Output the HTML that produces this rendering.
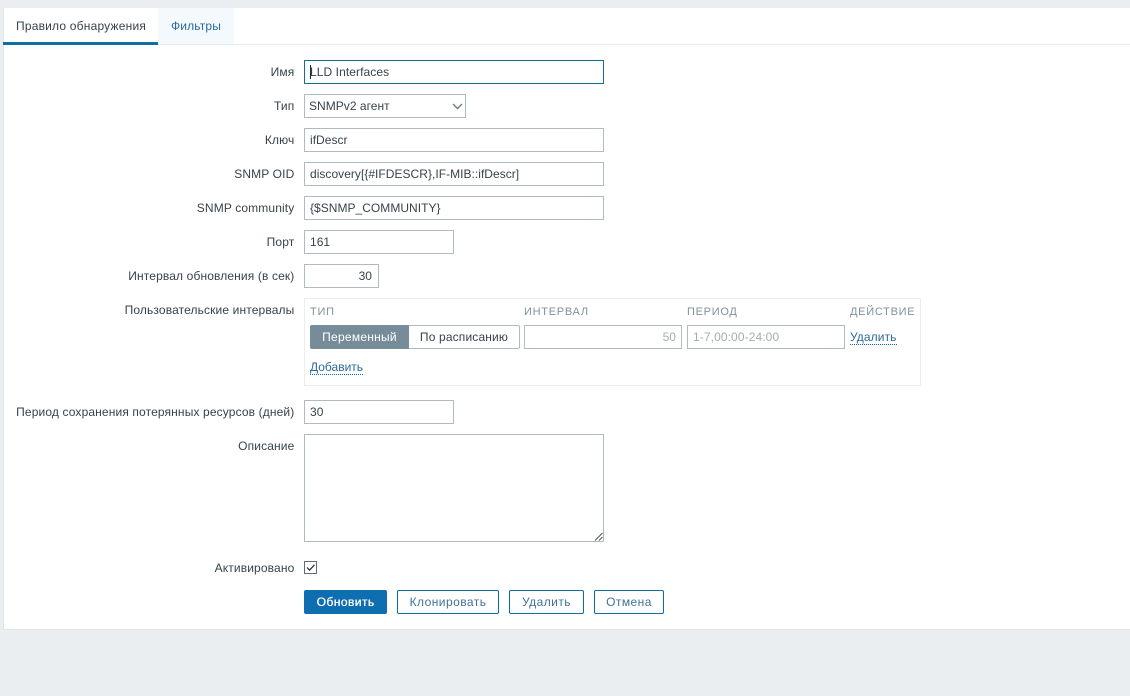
<!DOCTYPE html>
<html><head><meta charset="utf-8">
<style>
html,body{margin:0;padding:0;width:1130px;height:696px;overflow:hidden;background:#ebeef0;font-family:"Liberation Sans",Arial,sans-serif;font-size:12px;color:#36434b}
.p{position:absolute;box-sizing:border-box;white-space:nowrap}
#panel{left:3px;top:8px;width:1127px;height:622px;background:#fff;border:1px solid #dfe4e7;border-right:0;border-top:0}
.l{right:835.6px;text-align:right;line-height:14px;color:#36434b;letter-spacing:.13px}
.i{background:#fff;border:1px solid #b0bbc0;height:24px;line-height:22px;padding-left:5px;color:#36434b;letter-spacing:.03px}
.h{font-size:11px;letter-spacing:.72px;color:#7f929c;line-height:14px}
.a{color:#2a6a9c;line-height:14px;border-bottom:1px dotted #0f6aa8;letter-spacing:.1px}
.b{top:590px;height:24px;border:1px solid #0f6d9f;border-radius:2px;color:#3f7396;text-align:center;line-height:22px;background:#fff;letter-spacing:.45px}
</style></head><body>
<div class="p" id="panel"></div>
<div class="p" style="left:158px;top:8px;width:76px;height:36px;background:#f4f9fd"></div>
<div class="p" style="left:3px;top:44px;width:1127px;height:1px;background:#ebeef0"></div>
<div class="p" style="left:3px;top:42px;width:155px;height:3px;background:#0f6ea6"></div>
<div class="p" style="left:16px;top:19px;line-height:14px;color:#36434b;letter-spacing:.2px">Правило обнаружения</div>
<div class="p" style="left:171px;top:19px;line-height:14px;color:#2a6a9c;letter-spacing:.15px">Фильтры</div>

<div class="p l" style="top:65px">Имя</div>
<div class="p i" style="left:304px;top:60px;width:300px;border-color:#14708f;letter-spacing:.08px">LLD Interfaces</div>
<div class="p" style="left:310px;top:65px;width:1px;height:14px;background:#1f2c33"></div>

<div class="p l" style="top:99px">Тип</div>
<div class="p i" style="left:304px;top:94px;width:162px;padding-left:4px">SNMPv2 агент
<svg style="position:absolute;left:147px;top:8px" width="11" height="7" viewBox="0 0 11 7"><path d="M1 1l4.5 4.5L10 1" fill="none" stroke="#6b7d87" stroke-width="1.4"/></svg></div>

<div class="p l" style="top:133px">Ключ</div>
<div class="p i" style="left:304px;top:128px;width:300px">ifDescr</div>

<div class="p l" style="top:167px">SNMP OID</div>
<div class="p i" style="left:304px;top:162px;width:300px">discovery[{#IFDESCR},IF-MIB::ifDescr]</div>

<div class="p l" style="top:201px">SNMP community</div>
<div class="p i" style="left:304px;top:196px;width:300px">{$SNMP_COMMUNITY}</div>

<div class="p l" style="top:235px">Порт</div>
<div class="p i" style="left:304px;top:230px;width:150px">161</div>

<div class="p l" style="top:269px">Интервал обновления (в сек)</div>
<div class="p i" style="left:304px;top:264px;width:75px;text-align:right;padding:0 6px 0 0">30</div>

<div class="p l" style="top:303px">Пользовательские интервалы</div>
<div class="p" style="left:304px;top:298px;width:617px;height:88px;border:1px solid #ebeef0"></div>
<div class="p h" style="left:310px;top:305px">ТИП</div>
<div class="p h" style="left:524px;top:305px">ИНТЕРВАЛ</div>
<div class="p h" style="left:687px;top:305px">ПЕРИОД</div>
<div class="p h" style="left:850px;top:305px">ДЕЙСТВИЕ</div>
<div class="p" style="left:310px;top:325px;width:99px;height:24px;background:#768d99;color:#fff;text-align:center;line-height:24px;border-radius:2px 0 0 2px;letter-spacing:.25px">Переменный</div>
<div class="p" style="left:409px;top:325px;width:111px;height:24px;background:#fff;border:1px solid #b0bbc0;border-left:0;text-align:center;line-height:22px;border-radius:0 2px 2px 0;letter-spacing:.15px">По расписанию</div>
<div class="p i" style="left:524px;top:325px;width:158px;text-align:right;padding:0 5px;color:#a3adb2">50</div>
<div class="p i" style="left:687px;top:325px;width:158px;color:#a3adb2;letter-spacing:.1px">1-7,00:00-24:00</div>
<div class="p a" style="left:850px;top:330px">Удалить</div>
<div class="p a" style="left:310px;top:360px;letter-spacing:0">Добавить</div>

<div class="p l" style="top:405px">Период сохранения потерянных ресурсов (дней)</div>
<div class="p i" style="left:304px;top:400px;width:150px">30</div>

<div class="p l" style="top:439px">Описание</div>
<div class="p" style="left:304px;top:434px;width:300px;height:108px;background:#fff;border:1px solid #b0bbc0"></div>
<svg class="p" style="left:594px;top:532px" width="9" height="9" viewBox="0 0 9 9"><path d="M1 8.5L8.5 1M5 8.5L8.5 5" stroke="#555" stroke-width="1" fill="none"/></svg>

<div class="p l" style="top:561px">Активировано</div>
<div class="p" style="left:304px;top:561px;width:13px;height:13px;border:1px solid #5f6d74;background:#fff"></div>
<svg class="p" style="left:304px;top:561px" width="13" height="13" viewBox="0 0 13 13"><path d="M3 6.5l2.6 2.6L10.5 3.8" fill="none" stroke="#1f2c33" stroke-width="1.2"/></svg>

<div class="p b" style="left:304px;width:83px;background:#0f6eb0;border-color:#0f6eb0;color:#fff;text-shadow:.3px 0 0 #fff">Обновить</div>
<div class="p b" style="left:397px;width:102px">Клонировать</div>
<div class="p b" style="left:509px;width:75px">Удалить</div>
<div class="p b" style="left:594px;width:70px">Отмена</div>
</body></html>
